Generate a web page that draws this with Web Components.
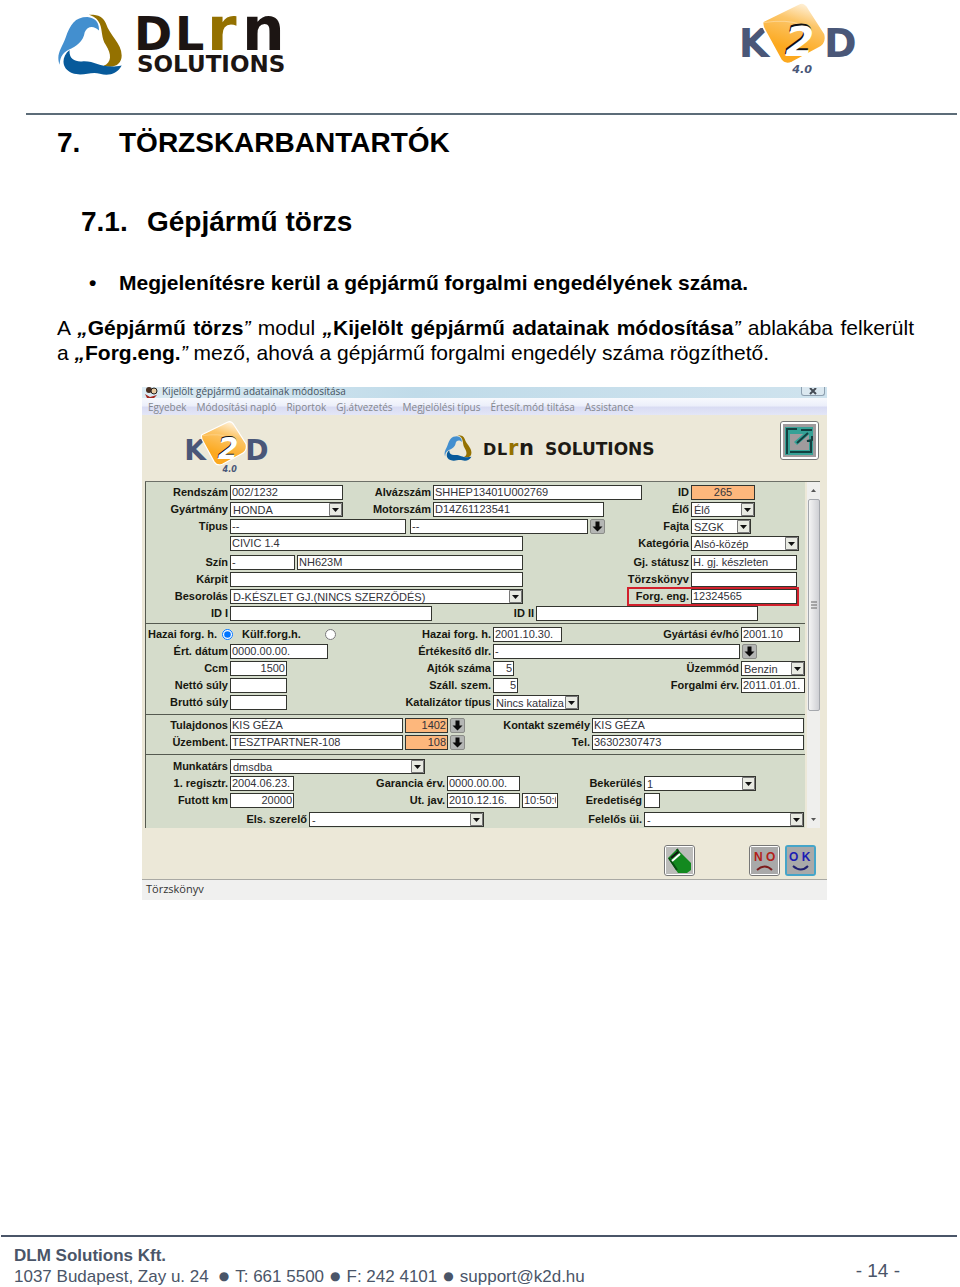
<!DOCTYPE html>
<html lang="hu">
<head>
<meta charset="utf-8">
<title>DLM Solutions - K2D 4.0</title>
<style>
  body {
    margin: 0;
    background: #fff;
    color: #000;
    font-family: "Liberation Sans", Arial, sans-serif;
  }
</style>
</head>
<body>

<doc-page>
  <dlm-logo slot="header"></dlm-logo>
  <k2d-logo slot="header"></k2d-logo>

  <doc-heading level="1" number="7.">TÖRZSKARBANTARTÓK</doc-heading>
  <doc-heading level="2" number="7.1.">Gépjármű törzs</doc-heading>
  <doc-text>
    <ul><li>Megjelenítésre kerül a gépjármű forgalmi engedélyének száma.</li></ul>
    <p>A <b><i>„</i>Gépjármű törzs</b><i>”</i> modul <b><i>„</i>Kijelölt gépjármű adatainak módosítása</b><i>”</i> ablakába felkerült a <b><i>„</i>Forg.eng.</b><i>”</i> mező, ahová a gépjármű forgalmi engedély száma rögzíthető.</p>
  </doc-text>
  <vehicle-window></vehicle-window>

  <page-footer slot="footer"></page-footer>
</doc-page>

<script>
const define = (name, html) => {
  customElements.define(name, class extends HTMLElement {
    constructor() {
      super();
      this.attachShadow({mode: "open"});
    }

    connectedCallback() {
      this.shadowRoot.innerHTML = typeof html === "function" ? html(this) : html;
    }
  });
};

define("doc-page", `
  <style>
    :host {
      display: flex;
      flex-direction: column;
      min-height: 100vh;
    }
    header {
      display: flex;
      justify-content: space-between;
      align-items: flex-start;
      box-sizing: border-box;
      height: 115px;
      margin: 0 3px 0 26px;
      padding: 2px 97px 0 31px;
      border-bottom: 2px solid #5c6c78;
    }
    main { flex: 1; }
  </style>
  <header><slot name="header"></slot></header>
  <main><slot></slot></main>
  <slot name="footer"></slot>
`);

// three interlocked ribbons
define("dlm-mark", `
  <style>
    :host { display: block; }
    svg { display: block; width: 100%; }
  </style>
  <svg viewBox="170 40 200 188" aria-hidden="true">
    <path fill="#438fcf" d="M178 194C166 162 184 144 196 112C210 72 224 49 262 49C286 51 299 66 297 90C282 74 262 76 254 95C250 124 228 138 205 148C184 160 179 174 178 194Z"/>
    <path fill="#947100" d="M266 42C295 41 310 48 318 68C330 106 366 128 366 166C366 192 345 206 311 197C336 188 336 162 318 134C304 112 308 90 300 70C292 52 280 46 266 42Z"/>
    <path fill="#075a9b" d="M208 149C206 178 226 186 250 183C290 182 306 208 366 196C352 223 325 228 300 221C270 213 250 231 215 219C183 206 182 170 208 149Z"/>
  </svg>
`);

define("dlm-logo", `
  <style>
    :host { display: block; padding-top: 11px; }
    div { display: flex; gap: 14px; }
    dlm-mark { width: 66px; padding-top: 1px; }
    svg { display: block; overflow: visible; }
    text { font-family: "DejaVu Sans", sans-serif; font-weight: bold; fill: #1c1513; }
    .gold { fill: #947100; }
  </style>
  <div>
    <dlm-mark></dlm-mark>
    <svg width="156" height="64" viewBox="0 0 156 64" role="img" aria-label="DLM Solutions">
      <text x="-3" y="37" font-size="46">D<tspan x="38">L</tspan><tspan class="gold" x="70" font-size="60">r</tspan><tspan x="105" font-size="60">n</tspan></text>
      <text x="0" y="59" font-size="23">SOLUTIONS</text>
    </svg>
  </div>
`);

define("k2d-logo", `
  <style>
    :host { display: block; width: 119px; }
    svg { display: block; width: 100%; }
    text { font-family: "DejaVu Sans", sans-serif; font-weight: bold; fill: #4a5778; }
    .two { font-style: italic; }
  </style>
  <svg viewBox="180 0 360 222" role="img" aria-label="K2D 4.0">
    <defs>
      <linearGradient id="box" x1="0.65" y1="0" x2="0.4" y2="0.75">
        <stop offset="0" stop-color="#fff2dc"/>
        <stop offset="0.4" stop-color="#fcc66a"/>
        <stop offset="1" stop-color="#fca91f"/>
      </linearGradient>
    </defs>
    <text x="173" y="166" font-size="119">K</text>
    <text x="431" y="166" font-size="119">D</text>
    <path d="M247 58L355 5Q372 -3 384 18L434 96Q442 128 414 140L334 183Q312 192 300 174L252 86Q242 68 247 58Z" fill="url(#box)" stroke="#fff" stroke-width="5"/>
    <path d="M250 62Q320 52 360 68" fill="none" stroke="#fff" stroke-width="2" opacity=".5"/>
    <text class="two" x="312" y="158" font-size="126" style="fill:#111">2</text>
    <text class="two" x="314" y="162" font-size="126" style="fill:#fff">2</text>
    <text x="335" y="215" font-size="34" style="font-style:italic">4.0</text>
  </svg>
`);

define("doc-heading", (el) => {
  const tag = "h" + el.getAttribute("level");
  return `
  <style>
    :host { display: block; }
    h1, h2 { display: flex; margin: 0; font-size: 28px; line-height: 32px; }
    h1 { padding: 12px 46px 0 57px; }
    h2 { padding: 47px 46px 0 81px; }
    h1 span { width: 62px; }
    h2 span { width: 66px; }
  </style>
  <${tag}><span>${el.getAttribute("number")}</span><slot></slot></${tag}>`;
});

define("doc-text", (el) => `
  <style>
    :host { display: block; padding: 32px 46px 0 57px; font-size: 21px; line-height: 25px; }
    ul { margin: 0; padding: 0 0 0 32px; list-style: none; font-weight: bold; }
    li { display: flex; }
    li::before { content: "•"; width: 30px; }
    p { margin: 20px 0 0; text-align: justify; }
  </style>
  ${el.innerHTML}
`);

define("page-footer", `
  <style>
    :host { display: block; color: #4a5568; font-size: 17px; line-height: 21px; }
    footer {
      display: flex;
      justify-content: space-between;
      align-items: center;
      margin: 0 3px 0 1px;
      padding: 8px 57px 0 13px;
      border-top: 2px solid #4a5568;
    }
    address { font-style: normal; }
    .line { display: flex; gap: 6px; }
    .line i { font: 12px/21px "DejaVu Sans", sans-serif; }
    .line i:first-of-type { margin-left: 4px; }
    a { color: inherit; text-decoration: none; }
    .number { padding-top: 8px; font-size: 19px; }
  </style>
  <footer>
    <address>
      <b>DLM Solutions Kft.</b>
      <div class="line">
        <span>1037 Budapest, Zay u. 24</span><i>●</i><span>T: 661 5500</span><i>●</i><span>F: 242 4101</span><i>●</i><a href="mailto:support@k2d.hu">support@k2d.hu</a>
      </div>
    </address>
    <span class="number">- 14 -</span>
  </footer>
`);

// Labelled control. --l is the label width, --w the box width.
// kind: text (default), select, check
define("form-field", (el) => {
  const label = el.getAttribute("label") || "";
  const value = el.getAttribute("value") || "";
  const name = label || el.getAttribute("name") || "";
  let control = `<input id="c" type="text" value="${value}" aria-label="${name}">`;
  if (el.getAttribute("kind") === "select") {
    control = `
      <span class="combo">
        <select id="c" aria-label="${name}"><option>${value}</option></select>
        <svg viewBox="0 0 13 13" aria-hidden="true"><path d="M.5.5h12v12H.5z" fill="#e8eae2" stroke="#777"/><path d="M3 5h7L6.500 9z" fill="#111"/></svg>
      </span>`;
  }
  if (el.getAttribute("kind") === "check") {
    control = `<input id="c" type="checkbox" aria-label="${name}">`;
  }
  return `
  <style>
    :host { display: flex; height: 15px; font-size: 11px; line-height: 15px; }
    /* the right column reserves room for the box only, its label reaches left of it */
    :host([slot="right"]) { --l: 90px; margin-left: -90px; }
    :host([marked]) { --l: 62px; margin-left: -62px; outline: 2px solid #d2202c; }
    label {
      box-sizing: border-box;
      width: var(--l, 84px);
      padding-right: 2px;
      color: #17170f;
      font-weight: bold;
      text-align: right;
      white-space: nowrap;
    }
    input, select {
      box-sizing: border-box;
      width: var(--w, 64px);
      height: 15px;
      margin: 0;
      padding: 0 1px;
      border: 1px solid #33352f;
      border-radius: 0;
      background: #fff;
      color: #33333a;
      font: inherit;
      appearance: none;
    }
    :host([hot]) input { background: #fdb77c; }
    :host([align="right"]) input { text-align: right; }
    :host([align="center"]) input { text-align: center; }
    .combo { display: grid; align-items: center; }
    .combo > * { grid-area: 1 / 1; }
    select { padding: 0 14px 0 2px; }
    svg { width: 13px; height: 13px; margin-right: 1px; justify-self: end; pointer-events: none; }
  </style>
  <label for="c">${label}</label>${control}`;
});

define("lookup-button", `
  <style>
    :host { display: block; margin-left: 2px; }
    button { display: block; width: 15px; height: 15px; padding: 0; border: 1px solid #8b8d88; border-radius: 2px; background: #b4b6b4; }
    svg { display: block; }
  </style>
  <button aria-label="Keresés"><svg width="13" height="13" viewBox="0 0 13 13"><path d="M4.500 1.500h4v5h3l-5 5-5-5h3z" fill="#0b0b0b"/></svg></button>
`);

define("form-section", `
  <style>
    :host {
      display: flex;
      flex-direction: column;
      gap: 2px;
      padding: 3px 0 4px;
      border-bottom: 1px solid #555a50;
    }
    :host([first]) { padding-bottom: 2px; }
    :host([last]) { border: 0; padding: 4px 0 0; }
  </style>
  <slot></slot>
`);

// left group takes the free width, the "right" slot keeps the section's --right width
define("form-row", `
  <style>
    :host { display: flex; justify-content: space-between; }
    :host([spaced]) { padding-top: 2px; }
    div { display: flex; }
    .right { width: var(--right); flex: none; }
  </style>
  <div><slot></slot></div>
  <div class="right"><slot name="right"></slot></div>
`);

define("icon-button", `
  <style>
    :host { display: block; }
    button {
      display: grid;
      place-items: center;
      box-sizing: border-box;
      width: var(--size, 31px);
      height: var(--size, 31px);
      padding: 0;
      border: 1px solid #777;
      border-radius: 3px;
      background: #fff;
    }
    :host([focused]) button { border: 2px solid #45a5c9; }
  </style>
  <button><slot></slot></button>
`);

define("vehicle-window", `
  <style>
    :host {
      display: block;
      margin: 22px 133px 0 142px;
      background: #ece8d8;
      font-size: 11px;
    }
    .title {
      display: flex;
      align-items: flex-end;
      height: 11px;
      overflow: hidden;
      padding: 0 2px 0 3px;
      gap: 4px;
      background: linear-gradient(90deg, #dcebf3, #c0dbe9 40%, #cfe3ee);
      color: #46525e;
      font: 10px/14px "Open Sans", sans-serif;
    }
    .title svg { flex: none; }
    .title span { flex: 1; }
    .close { width: 24px; height: 9px; padding: 0; border: 1px solid #8ea0b0; border-top: 0; border-radius: 0 0 3px 3px; background: #dbe8f0; align-self: flex-start; }
    .close svg { display: block; margin: auto; }
    nav {
      display: flex;
      gap: 10px;
      padding: 2px 6px 1px;
      background: linear-gradient(#f7f9fd, #eceffa 45%, #d9dcf3 55%, #e3e6f7);
    }
    nav button { padding: 0; border: 0; background: none; color: #83868e; font: 10px/14px "Open Sans", sans-serif; }
    .brand { display: flex; align-items: flex-start; padding: 6px 8px 8px 44px; }
    k2d-logo { width: 85px; }
    .dlm { display: flex; align-items: center; gap: 12px; margin: 0 123px 0 auto; padding-top: 14px; }
    .dlm dlm-mark { width: 28px; }
    .dlm svg { overflow: visible; }
    .dlm text { font-family: "DejaVu Sans", sans-serif; font-weight: bold; fill: #1d1a14; }
    .panel { display: flex; margin: 0 7px 0 3px; border-top: 1px solid #6d7068; }
    form { flex: 1; min-width: 0; height: 346px; overflow: hidden; border-left: 1px solid #555a50; background: #d5dccb; }
    .radios { display: flex; align-items: center; height: 15px; width: 190px; padding-left: 2px; color: #17170f; font-weight: bold; line-height: 15px; }
    .radios label { white-space: nowrap; }
    .radios input { width: 11px; height: 11px; margin: 0 9px 0 5px; }
    .radios label + input + label + input { margin-left: 24px; }
    .scroll { display: flex; flex-direction: column; align-items: center; width: 13px; margin-left: 2px; background: #efefed; }
    .scroll svg { flex: none; margin: 4px 0; }
    .thumb { display: grid; place-items: center; box-sizing: border-box; width: 12px; height: 212px; border: 1px solid #a5a8ad; border-radius: 2px; background: linear-gradient(90deg, #f4f4f4, #cfd0d4); }
    .scroll .grow { flex: 1; }
    .actions { display: flex; justify-content: flex-end; gap: 5px; padding: 17px 11px 3px; }
    .actions .first { margin-right: 49px; }
    .status { border-top: 1px solid #a9a9a4; padding: 2px 4px 4px; background: #f0f0ef; color: #333; font: 11px/14px "Open Sans", sans-serif; }
    .status span { display: block; }
  </style>

  <div class="title">
    <svg width="13" height="11" viewBox="0 0 13 11"><circle cx="4" cy="3" r="3" fill="#4a2f20"/><circle cx="9" cy="4" r="3" fill="#e6c9a0" stroke="#222"/><path d="M0 7l5 3 7-2-3 3H2z" fill="#a2281f"/></svg>
    <span>Kijelölt gépjármű adatainak módosítása</span>
    <button class="close" aria-label="Bezárás"><svg width="10" height="7" viewBox="0 0 10 7"><path d="M2 0l6 6M8 0L2 6" stroke="#454c55" stroke-width="2"/></svg></button>
  </div>
  <nav>
    <button>Egyebek</button><button>Módosítási napló</button><button>Riportok</button><button>Gj.átvezetés</button><button>Megjelölési típus</button><button>Értesít.mód tiltása</button><button>Assistance</button>
  </nav>
  <div class="brand">
    <k2d-logo></k2d-logo>
    <div class="dlm">
      <dlm-mark></dlm-mark>
      <svg width="173" height="20" viewBox="0 0 173 20" role="img" aria-label="DLM Solutions">
        <text x="-1" y="17" font-size="16">D<tspan x="13">L</tspan><tspan x="24" font-size="21" fill="#947100">r</tspan><tspan x="35" font-size="21">n</tspan></text>
        <text x="61" y="17" font-size="17">SOLUTIONS</text>
      </svg>
    </div>
    <icon-button style="--size: 39px">
      <svg width="33" height="33" viewBox="0 0 33 33"><path d="M0 0h33v33H0z" fill="#a09b9d"/><path d="M2 3h28v28H2z" fill="#35a196"/><path d="M7 10h14l5-2v18H7z" fill="#a09b9d"/><path d="M14 21L29 8l-3-3-15 13z" fill="#35a196"/><path d="M4 30V5h10M18 6h11M7 28h21V17h-4l5-1v-4M14 19l11-10" fill="none" stroke="#123f40" stroke-width="2"/></svg>
    </icon-button>
  </div>

  <div class="panel">
    <form>
      <form-section first style="--right: 114px">
        <form-row>
          <form-field label="Rendszám" value="002/1232" style="--w: 113px"></form-field>
          <form-field label="Alvázszám" value="SHHEP13401U002769" style="--l: 90px; --w: 209px"></form-field>
          <form-field slot="right" label="ID" value="265" hot align="center"></form-field>
        </form-row>
        <form-row>
          <form-field kind="select" label="Gyártmány" value="HONDA" style="--w: 113px"></form-field>
          <form-field label="Motorszám" value="D14Z61123541" style="--l: 90px; --w: 171px"></form-field>
          <form-field slot="right" kind="select" label="Élő" value="Élő"></form-field>
        </form-row>
        <form-row>
          <form-field label="Típus" value="--" style="--w: 176px"></form-field>
          <form-field name="Altípus" value="--" style="--l: 4px; --w: 178px"></form-field>
          <lookup-button></lookup-button>
          <form-field slot="right" kind="select" label="Fajta" value="SZGK" style="--w: 60px"></form-field>
        </form-row>
        <form-row>
          <form-field name="Megnevezés" value="CIVIC 1.4" style="--w: 293px"></form-field>
          <form-field slot="right" kind="select" label="Kategória" value="Alsó-közép" style="--w: 108px"></form-field>
        </form-row>
        <form-row spaced>
          <form-field label="Szín" value="-" style="--w: 65px"></form-field>
          <form-field name="Színkód" value="NH623M" style="--l: 2px; --w: 226px"></form-field>
          <form-field slot="right" label="Gj. státusz" value="H. gj. készleten" style="--w: 106px"></form-field>
        </form-row>
        <form-row>
          <form-field label="Kárpit" style="--w: 293px"></form-field>
          <form-field slot="right" label="Törzskönyv" style="--w: 106px"></form-field>
        </form-row>
        <form-row>
          <form-field kind="select" label="Besorolás" value="D-KÉSZLET GJ.(NINCS SZERZŐDÉS)" style="--w: 293px"></form-field>
          <form-field slot="right" label="Forg. eng." value="12324565" marked style="--w: 106px"></form-field>
        </form-row>
        <form-row>
          <form-field label="ID I" style="--w: 202px"></form-field>
          <form-field label="ID II" style="--l: 104px; --w: 222px"></form-field>
        </form-row>
      </form-section>

      <form-section style="--right: 64px">
        <form-row>
          <div class="radios">
            <label for="home">Hazai forg. h.</label><input type="radio" name="forg" id="home" checked>
            <label for="abroad">Külf.forg.h.</label><input type="radio" name="forg" id="abroad">
          </div>
          <form-field label="Hazai forg. h." value="2001.10.30." style="--l: 155px; --w: 69px"></form-field>
          <form-field slot="right" label="Gyártási év/hó" value="2001.10" style="--w: 59px"></form-field>
        </form-row>
        <form-row>
          <form-field label="Ért. dátum" value="0000.00.00." style="--w: 98px"></form-field>
          <form-field label="Értékesítő dlr." value="-" style="--l: 165px; --w: 247px"></form-field>
          <lookup-button></lookup-button>
        </form-row>
        <form-row>
          <form-field label="Ccm" value="1500" align="right" style="--w: 57px"></form-field>
          <form-field label="Ajtók száma" value="5" align="right" style="--l: 206px; --w: 21px"></form-field>
          <form-field slot="right" kind="select" label="Üzemmód" value="Benzin"></form-field>
        </form-row>
        <form-row>
          <form-field label="Nettó súly" style="--w: 57px"></form-field>
          <form-field label="Száll. szem." value="5" align="right" style="--l: 206px; --w: 25px"></form-field>
          <form-field slot="right" label="Forgalmi érv." value="2011.01.01."></form-field>
        </form-row>
        <form-row>
          <form-field label="Bruttó súly" style="--w: 57px"></form-field>
          <form-field kind="select" label="Katalizátor típus" value="Nincs kataliza" style="--l: 206px; --w: 86px"></form-field>
        </form-row>
      </form-section>

      <form-section style="--right: 213px">
        <form-row>
          <form-field label="Tulajdonos" value="KIS GÉZA" style="--w: 173px"></form-field>
          <form-field name="Tulajdonos kód" value="1402" hot align="right" style="--l: 2px; --w: 43px"></form-field>
          <lookup-button></lookup-button>
          <form-field slot="right" label="Kontakt személy" value="KIS GÉZA" style="--w: 212px"></form-field>
        </form-row>
        <form-row>
          <form-field label="Üzembent." value="TESZTPARTNER-108" style="--w: 173px"></form-field>
          <form-field name="Üzembentartó kód" value="108" hot align="right" style="--l: 2px; --w: 43px"></form-field>
          <lookup-button></lookup-button>
          <form-field slot="right" label="Tel." value="36302307473" style="--w: 212px"></form-field>
        </form-row>
      </form-section>

      <form-section last style="--right: 161px">
        <form-row>
          <form-field kind="select" label="Munkatárs" value="dmsdba" style="--w: 195px"></form-field>
        </form-row>
        <form-row>
          <form-field label="1. regisztr." value="2004.06.23."></form-field>
          <form-field label="Garancia érv." value="0000.00.00." style="--l: 153px; --w: 73px"></form-field>
          <form-field slot="right" kind="select" label="Bekerülés" value="1" style="--w: 112px"></form-field>
        </form-row>
        <form-row>
          <form-field label="Futott km" value="20000" align="right"></form-field>
          <form-field label="Ut. jav." value="2010.12.16." style="--l: 153px; --w: 73px"></form-field>
          <form-field name="Idő" value="10:50:0" style="--l: 0px; --w: 36px"></form-field>
          <form-field slot="right" kind="check" label="Eredetiség" style="--w: 16px"></form-field>
        </form-row>
        <form-row spaced>
          <form-field kind="select" label="Els. szerelő" value="-" style="--l: 163px; --w: 175px"></form-field>
          <form-field slot="right" kind="select" label="Felelős üi." value="-" style="--w: 160px"></form-field>
        </form-row>
      </form-section>
    </form>
    <div class="scroll" aria-hidden="true">
      <svg width="7" height="9" viewBox="0 0 7 9"><path d="M1 6l2.500-3L6 6z" fill="#555"/></svg>
      <div class="thumb"><svg width="6" height="8" viewBox="0 0 6 8"><path d="M0 1h6M0 4h6M0 7h6" stroke="#666"/></svg></div>
      <div class="grow"></div>
      <svg width="7" height="9" viewBox="0 0 7 9"><path d="M1 3l2.500 3L6 3z" fill="#555"/></svg>
    </div>
  </div>

  <div class="actions">
    <icon-button class="first">
      <svg width="27" height="27" viewBox="0 0 27 27"><path d="M0 0h27v27H0z" fill="#bcbcba"/><path d="M2 11L11 2l14 14v7l-4 3h-9z" fill="#13891f"/><path d="M3 11l8 12M11 2l2 4" stroke="#064d10" stroke-width="2"/><path d="M6 14l8-7" stroke="#fff" stroke-width="2"/><path d="M5 11l7-6" stroke="#111" stroke-width="2"/></svg>
    </icon-button>
    <icon-button>
      <svg width="27" height="27" viewBox="0 0 27 27"><path d="M0 0h27v27H0z" fill="#a9a9a9"/><text x="3" y="14" font-family="Liberation Sans" font-weight="bold" font-size="12" fill="#b32018" xml:space="preserve">N O</text><path d="M6 23q8-7 15 0" fill="none" stroke="#7c1b1b" stroke-width="2"/></svg>
    </icon-button>
    <icon-button focused>
      <svg width="27" height="27" viewBox="0 0 27 27"><path d="M0 0h27v27H0z" fill="#a9a9a9"/><text x="2" y="14" font-family="Liberation Sans" font-weight="bold" font-size="12" fill="#1d1db4" xml:space="preserve">O K</text><path d="M6 19q8 7 15 0" fill="none" stroke="#20206f" stroke-width="2"/></svg>
    </icon-button>
  </div>
  <div class="status"><span>Törzskönyv</span></div>
`);
</script>
</body>
</html>
